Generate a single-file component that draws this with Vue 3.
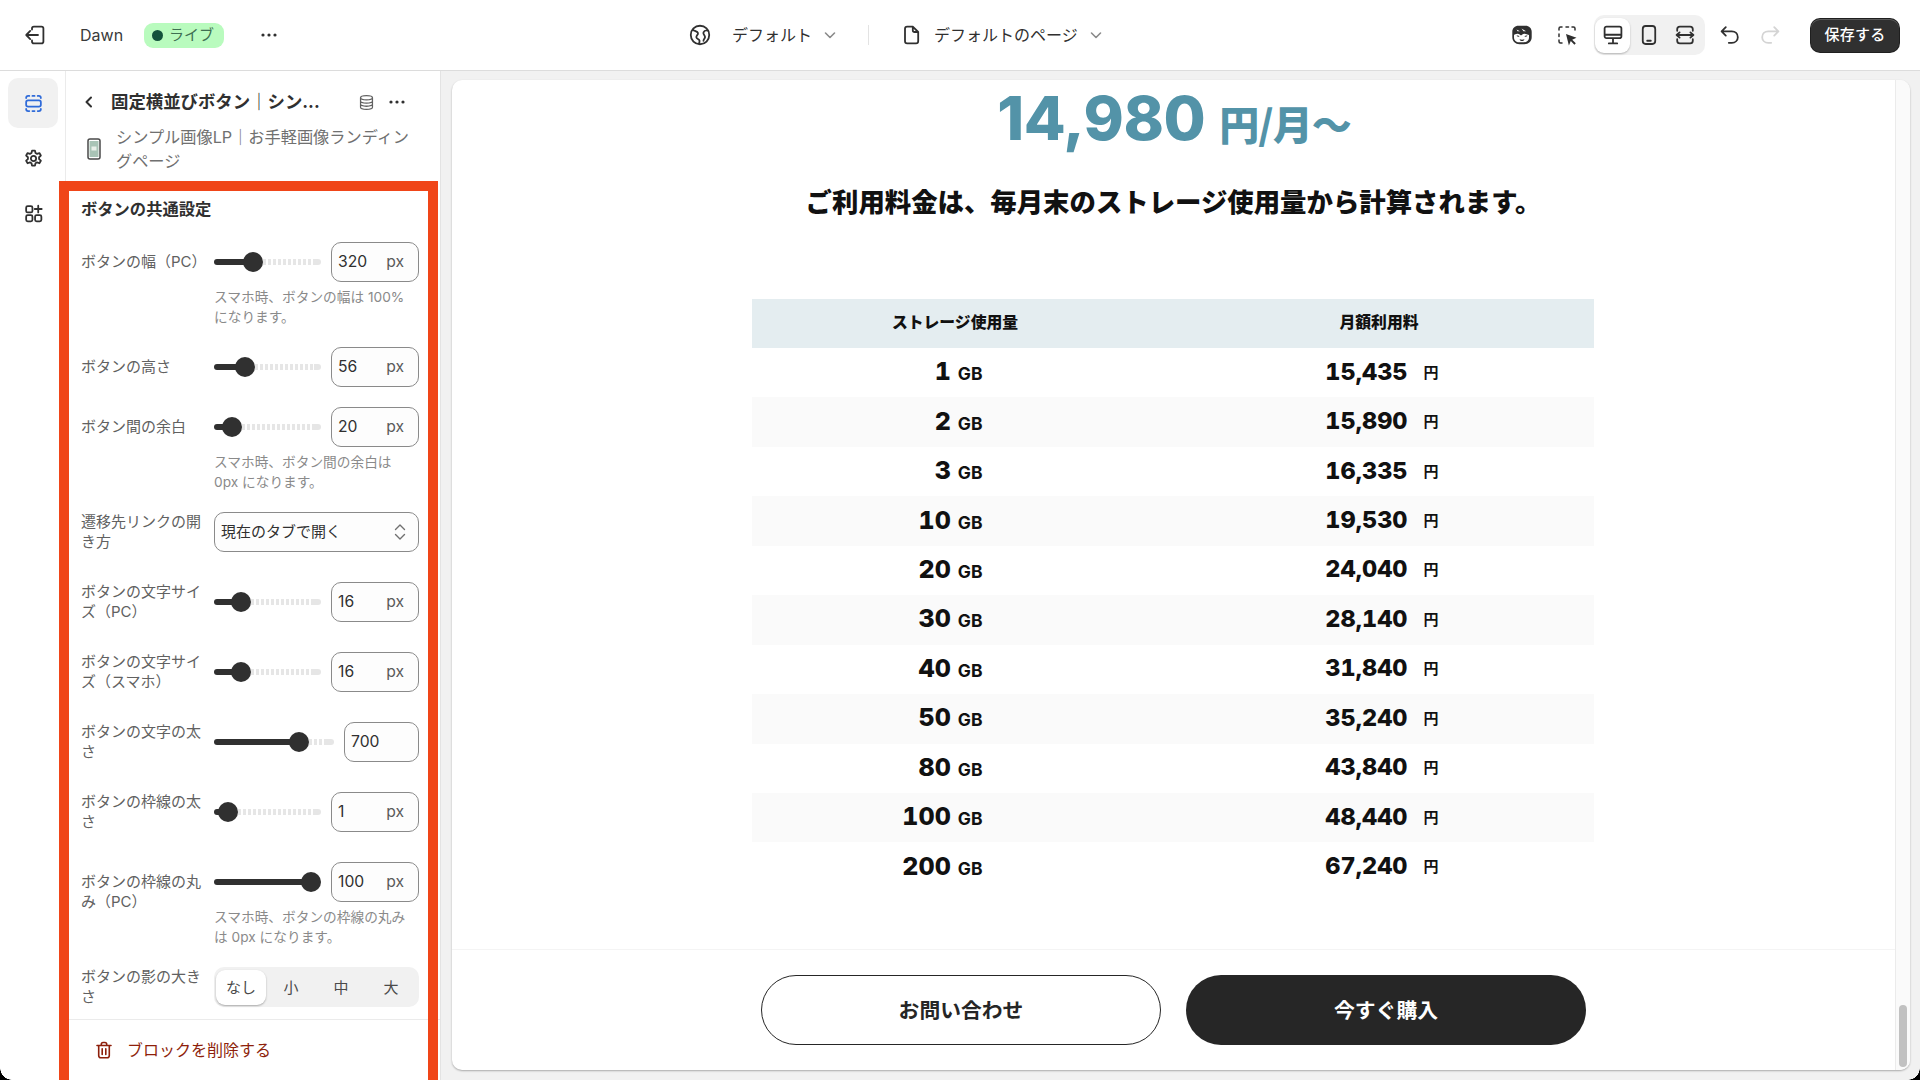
<script setup>
const rows = [
  { label: 'ボタンの幅（PC）', value: '320', fill: 39, help: ['スマホ時、ボタンの幅は 100%', 'になります。'] },
  { label: 'ボタンの高さ', value: '56', fill: 31 },
  { label: 'ボタン間の余白', value: '20', fill: 17.5, help: ['スマホ時、ボタン間の余白は', '0px になります。'] },
  { type: 'select', label: '遷移先リンクの開き方', value: '現在のタブで開く', wide: true },
  { label: 'ボタンの文字サイズ（PC）', value: '16', fill: 27, wide: true },
  { label: 'ボタンの文字サイズ（スマホ）', value: '16', fill: 27, wide: true },
  { label: 'ボタンの文字の太さ', value: '700', fill: 85, wide: true, noUnit: true },
  { label: 'ボタンの枠線の太さ', value: '1', fill: 13.5, wide: true },
  { label: 'ボタンの枠線の丸み（PC）', value: '100', fill: 97, help: ['スマホ時、ボタンの枠線の丸み', 'は 0px になります。'] },
]
const prices = [
  ['1', '15,435'], ['2', '15,890'], ['3', '16,335'], ['10', '19,530'], ['20', '24,040'], ['30', '28,140'],
  ['40', '31,840'], ['50', '35,240'], ['80', '43,840'], ['100', '48,440'], ['200', '67,240'],
]
const shadows = ['なし', '小', '中', '大']
</script>

<template>
  <div class="app">
    <header class="top">
      <div class="top-left">
        <svg class="ic exit" viewBox="0 0 20 20"><path d="M7.5 5.5V4.6c0-.9.7-1.6 1.6-1.6h6.3c.9 0 1.6.7 1.6 1.6v10.8c0 .9-.7 1.6-1.6 1.6H9.100c-.9 0-1.600-.7-1.600-1.600v-.9M12.500 10H2.800M6 6.600 2.700 10 6 13.400"/></svg>
        <span class="theme">Dawn</span>
        <span class="live"><i></i>ライブ</span>
        <svg class="dots" viewBox="0 0 18 6"><circle cx="3" cy="3" r="1.600"/><circle cx="9" cy="3" r="1.600"/><circle cx="15" cy="3" r="1.600"/></svg>
      </div>
      <div class="top-mid">
        <svg class="ic" viewBox="0 0 20 20"><circle cx="10" cy="10" r="7.700"/><path d="M4 5.500c1.500 1.500 3.800 1.300 4.300 2.800.5 1.600-1.800 2.100-1.300 3.800.4 1.300 2.300 1.200 2.600 2.700.1.800-.1 1.500-.4 2.300M16.800 6.300c-1.700-.3-3.400.2-3.900 1.500-.6 1.700 1.400 2.400 1.300 4-.1 1.200-1.200 1.500-1.300 3"/></svg>
        <span class="picker">デフォルト</span>
        <svg class="chev" viewBox="0 0 14 14"><path d="M2.500 5 7 9.500 11.500 5"/></svg>
        <span class="vline"></span>
        <svg class="ic doc" viewBox="0 0 20 20"><path d="M5 4.800C5 3.800 5.800 3 6.800 3h4.700L16 7.500v7.700c0 1-.8 1.800-1.800 1.800H6.800C5.800 17 5 16.200 5 15.200zM11.500 3v3c0 .9.600 1.500 1.500 1.500h3"/></svg>
        <span class="picker">デフォルトのページ</span>
        <svg class="chev" viewBox="0 0 14 14"><path d="M2.500 5 7 9.500 11.500 5"/></svg>
      </div>
      <div class="top-right">
        <svg class="ic mask" viewBox="0 0 24 24"><path class="solid" d="M8.500 2.800h7c3.600 0 6.200 2.600 6.200 6v5.400c0 4-3.200 7-7.200 7h-5c-4 0-7.200-3-7.200-7V8.800c0-3.400 2.600-6 6.200-6z"/><path class="light" d="M4.600 11.400c2.200-.7 4.300-.8 5.400.3.700.7 1.300.7 2 0 1.100-1.100 3.200-1 5.400-.3l1.600.5v2.500c0 2.700-2.300 4.800-5 4.800H9c-2.700 0-5-2.100-5-4.800v-2.500z"/><path class="solid" d="M6.500 12.700c1.300-.3 2.500-.1 3 .8-1 .5-2.100.3-3-.8zM17.500 12.700c-1.300-.3-2.500-.1-3 .8 1 .5 2.100.3 3-.8zM9.500 16.300c1.700.6 3.300.6 5 0-.5 1.300-1.400 1.800-2.500 1.800s-2-.5-2.500-1.800z"/><path class="light" d="M6.500 6.500 10 8.300H7.500zM11.500 5.600l4.500 2.600h-2.500z"/></svg>
        <svg class="ic cursor" viewBox="0 0 24 24"><path d="M7 4H5.500C4.700 4 4 4.700 4 5.500V7M11 4h2.500M17 4h1.500c.8 0 1.500.7 1.500 1.500V7M4 11v2.500M4 17v1.500c0 .8.7 1.500 1.500 1.500H7"/><path class="solid" d="m11 11 10.500 3.800-4.300 1.900 3.600 3.600-1.400 1.400-3.600-3.600-1.900 4.300z"/></svg>
        <div class="devices">
          <span class="dev on"><svg class="ic" viewBox="0 0 20 20"><path d="M4.600 3h10.800C16.300 3 17 3.700 17 4.600V11c0 .9-.7 1.600-1.600 1.600H4.600C3.700 12.600 3 11.900 3 11V4.600C3 3.700 3.700 3 4.600 3zM3 9.800h14M10 12.600v4.200M6.500 17h7"/></svg></span>
          <span class="dev"><svg class="ic" viewBox="0 0 20 20"><rect x="4.800" y="2.500" width="10.400" height="15" rx="2.400"/><path d="M8.500 14.800h3"/></svg></span>
          <span class="dev"><svg class="ic" viewBox="0 0 20 20"><path d="M3.500 6.500V5.200C3.500 4 4.500 3 5.700 3h8.600c1.200 0 2.200 1 2.200 2.200v1.300M3.500 13.500v1.300C3.500 16 4.500 17 5.700 17h8.600c1.200 0 2.200-1 2.200-2.200v-1.300M3 10h14M5.500 7.800 3 10l2.500 2.200M14.500 7.800 17 10l-2.500 2.200"/></svg></span>
        </div>
        <svg class="ic undo" viewBox="0 0 20 20"><path d="M6.500 3.500 3 7l3.500 3.500M3.200 7h8.300c2.900 0 5 2 5 4.800 0 2.700-2.100 4.700-5 4.700H9"/></svg>
        <svg class="ic redo" viewBox="0 0 20 20"><path d="M13.500 3.500 17 7l-3.500 3.500M16.800 7H8.500c-2.900 0-5 2-5 4.800 0 2.700 2.100 4.700 5 4.700H11"/></svg>
        <button class="save">保存する</button>
      </div>
    </header>

    <div class="body">
      <nav class="rail">
        <span class="rail-item active"><svg class="ic" viewBox="0 0 20 20"><path d="M6 2.800H5C3.800 2.800 3 3.700 3 4.800M9 2.800h2M14 2.800h1c1.200 0 2 .9 2 2M3 15.200c0 1.100.8 2 2 2h1M9 17.200h2M14 17.200h1c1.200 0 2-.9 2-2"/><rect x="3" y="7" width="14" height="6" rx="1.800"/></svg></span>
        <span class="rail-item"><svg class="ic" viewBox="0 0 20 20"><circle cx="10" cy="10" r="2.500"/><path d="M8.600 2.500h2.800l.5 2.300 1.500.8 2.200-.8 1.400 2.400-1.700 1.600v1.700l1.700 1.600-1.400 2.400-2.200-.8-1.500.8-.5 2.300H8.600l-.5-2.300-1.500-.8-2.200.8-1.400-2.400 1.700-1.600V8.800L3 7.200l1.400-2.400 2.200.8 1.500-.8z"/></svg></span>
        <span class="rail-item"><svg class="ic" viewBox="0 0 20 20"><rect x="3" y="3" width="6" height="6" rx="1.500"/><rect x="3" y="11.500" width="6" height="6" rx="1.500"/><rect x="11.500" y="11.500" width="6" height="6" rx="1.500"/><path d="M14.500 2.500v6.500M11.200 5.700h6.600"/></svg></span>
      </nav>

      <aside class="panel">
        <div class="panel-head">
          <svg class="back" viewBox="0 0 14 14"><path d="M9 2.500 4.500 7 9 11.500"/></svg>
          <span class="title">固定横並びボタン｜シン...</span>
          <svg class="db" viewBox="0 0 20 20"><ellipse cx="10" cy="4.500" rx="7" ry="2.500"/><path d="M3 4.500v11c0 1.400 3.100 2.500 7 2.500s7-1.100 7-2.500v-11M3 8.200c0 1.400 3.100 2.500 7 2.500s7-1.100 7-2.500M3 11.900c0 1.400 3.100 2.500 7 2.500s7-1.100 7-2.500"/></svg>
          <svg class="dots" viewBox="0 0 18 6"><circle cx="3" cy="3" r="1.600"/><circle cx="9" cy="3" r="1.600"/><circle cx="15" cy="3" r="1.600"/></svg>
        </div>
        <div class="panel-sub">
          <svg class="phone" viewBox="0 0 14 22"><rect x="1" y="1" width="12" height="20" rx="2" fill="#fff" stroke="#4a4a4a" stroke-width="1.500"/><rect x="2.500" y="3" width="9" height="16" fill="#a9c4b6"/><rect x="4.500" y="8.500" width="5" height="4" fill="#e9efe9"/></svg>
          <p>シンプル画像LP｜お手軽画像ランディングページ</p>
        </div>

        <div class="form">
          <h3>ボタンの共通設定</h3>
          <div v-for="r in rows" :key="r.label" class="row" :class="{ wide: r.wide, helped: r.help }">
            <label>{{ r.label }}</label>
            <div class="ctrl">
              <div v-if="r.type === 'select'" class="select">
                <span>{{ r.value }}</span>
                <svg viewBox="0 0 14 20"><path d="M2.500 7.500 7 3l4.500 4.500M2.500 12.500 7 17l4.500-4.500"/></svg>
              </div>
              <div v-else class="range-line">
                <div class="slider">
                  <span class="fill" :style="{ width: r.fill + 'px' }"></span>
                  <span class="rest"></span>
                  <span class="thumb" :style="{ left: r.fill + 'px' }"></span>
                </div>
                <div class="num" :class="{ short: r.noUnit }">
                  <span>{{ r.value }}</span>
                  <em v-if="!r.noUnit">px</em>
                </div>
              </div>
              <p v-if="r.help" class="help"><span v-for="h in r.help" :key="h">{{ h }}</span></p>
            </div>
          </div>
          <div class="row last">
            <label>ボタンの影の大きさ</label>
            <div class="seg">
              <span v-for="(s, i) in shadows" :key="s" :class="{ on: i === 0 }">{{ s }}</span>
            </div>
          </div>
        </div>

        <div class="panel-foot">
          <svg class="trash" viewBox="0 0 20 20"><path d="M3 5.500h14M7.300 5.500V4.300c0-1 .8-1.800 1.800-1.800h1.800c1 0 1.800.8 1.800 1.800v1.200M4.700 5.500v10c0 1.300 1 2.300 2.300 2.300h6c1.300 0 2.300-1 2.300-2.300v-10M8.200 8.800v5.600M11.800 8.800v5.600"/></svg>
          <span>ブロックを削除する</span>
        </div>
      </aside>

      <main class="stage">
        <div class="card">
          <div class="page">
            <div class="scroll">
              <div class="price"><b>14,980</b><span>円/月〜</span></div>
              <h2>ご利用料金は、毎月末のストレージ使用量から計算されます。</h2>
              <div class="table">
                <div class="thead"><span>ストレージ使用量</span><span>月額利用料</span></div>
                <div v-for="p in prices" :key="p[0]" class="tr">
                  <span class="gb"><b>{{ p[0] }}</b><small>GB</small></span>
                  <span class="yen"><b>{{ p[1] }}</b><small>円</small></span>
                </div>
              </div>
            </div>
            <div class="sticky">
              <a class="cta ghost">お問い合わせ</a>
              <a class="cta solid-btn">今すぐ購入</a>
            </div>
          </div>
          <div class="bar"><i></i></div>
        </div>
      </main>
    </div>

    <div class="annot"></div>
    <span class="corner cl"></span>
    <span class="corner cr"></span>
  </div>
</template>

<style>
html, body { margin: 0; overflow: hidden; background: #f1f1f1; }
</style>

<style scoped>
* { box-sizing: border-box; }
.app {
  position: relative; width: 1920px; height: 1080px; overflow: hidden; display: flex; flex-direction: column;
  background: #f1f1f1; color: #303030;
  font-family: Inter, "Noto Sans CJK JP", sans-serif; font-size: 15px; line-height: 20px;
}
.ic { width: 24px; height: 24px; fill: none; stroke: #303030; stroke-width: 1.5; stroke-linecap: round; stroke-linejoin: round; flex: none; }
.ic .solid { fill: #303030; stroke: none; }
.ic .light { fill: #fff; stroke: none; }

.top { height: 71px; flex: none; display: flex; align-items: center; background: #fff; border-bottom: 1px solid #dcdcdc; position: relative; z-index: 2; }
.top-left { display: flex; align-items: center; width: 688px; padding-left: 23px; flex: none; }
.theme { margin-left: 33px; font-size: 16px; color: #3a3a3a; }
.live { display: flex; align-items: center; gap: 6px; margin-left: 21px; width: 80px; height: 25px; padding-left: 8px; border-radius: 9px; background: #b9fbbe; color: #3f6f52; font-size: 15px; }
.live i { width: 11px; height: 11px; border-radius: 50%; background: #14523c; }
.dots { width: 18px; height: 6px; fill: #303030; flex: none; }
.top-left .dots { margin-left: 36px; }
.top-mid { display: flex; align-items: center; }
.picker { font-size: 16px; color: #303030; white-space: nowrap; }
.top-mid .ic:first-child { margin-right: 20px; }
.chev { width: 14px; height: 14px; margin-left: 11px; fill: none; stroke: #8a8a8a; stroke-width: 1.600; stroke-linecap: round; stroke-linejoin: round; }
.vline { width: 1px; height: 20px; background: #e3e3e3; margin: 0 30px 0 31px; }
.doc { margin-right: 11px; }
.top-right { margin-left: auto; padding-right: 21px; display: flex; align-items: center; }
.mask { margin-right: 21px; }
.cursor { margin-right: 15px; }
.devices { display: flex; align-items: center; width: 111px; height: 40px; padding: 2px 1px; background: #f1f1f1; border-radius: 10px; }
.dev { width: 35px; height: 35px; margin-right: 1px; display: flex; align-items: center; justify-content: center; border-radius: 9px; }
.dev.on { background: #fff; box-shadow: 0 1px 2px rgba(0,0,0,.25); }
.undo { margin-left: 13px; }
.redo { margin-left: 16px; stroke: #d4d4d4; }
.save { margin-left: 29px; width: 88px; height: 33px; border: 0; border-radius: 9px; background: #303030; color: #fff; font: 500 15px/20px Inter, "Noto Sans CJK JP", sans-serif; box-shadow: inset 0 1px 0 rgba(255,255,255,.2), 0 0 0 1px #1f1f1f; letter-spacing: .3px; }

.body { flex: 1; min-height: 0; display: flex; }
.rail { width: 66px; flex: none; background: #fff; border-right: 1px solid #ebebeb; padding: 7px 8px 0; display: flex; flex-direction: column; gap: 5px; }
.rail-item { width: 50px; height: 50px; border-radius: 10px; display: flex; align-items: center; justify-content: center; }
.rail-item .ic { width: 21px; height: 21px; stroke-width: 1.700; }
.rail-item.active { background: #f1f1f1; }
.rail-item.active .ic { stroke: #2f6bd9; }

.panel { width: 375px; flex: none; background: #fff; border-right: 1px solid #e3e3e3; display: flex; flex-direction: column; position: relative; }
.panel-head { display: flex; align-items: center; height: 46px; margin-top: 8px; padding: 0 0 0 16px; flex: none; }
.back { width: 14px; height: 14px; fill: none; stroke: #303030; stroke-width: 2; stroke-linecap: round; stroke-linejoin: round; flex: none; }
.title { width: 240px; margin-left: 15px; font-size: 17.400px; font-weight: 700; white-space: nowrap; flex: none; }
.db { width: 17px; height: 17px; margin-left: 7px; fill: none; stroke: #616161; stroke-width: 1.500; }
.panel-head .dots { margin-left: 13px; }
.panel-sub { display: flex; align-items: center; padding-left: 21px; height: 48px; color: #707070; flex: none; }
.phone { width: 14px; height: 22px; flex: none; }
.panel-sub p { margin: 0 0 0 15px; width: 300px; font-size: 16.200px; line-height: 24px; }
.form { flex: 1; padding: 26px 11px 0 15px; min-height: 0; }
h3 { margin: 0 0 23px; font-size: 16.300px; line-height: 20px; font-weight: 700; color: #303030; }
.row { display: grid; grid-template-columns: 124px 205px; column-gap: 9px; align-items: center; margin-bottom: 20px; }
.row.wide { margin-bottom: 30px; }
.row.helped { align-items: start; }
.row.helped label { padding-top: 10px; }
label { color: #616161; font-size: 15px; line-height: 20px; }
.range-line { display: flex; align-items: center; gap: 10px; }
.slider { position: relative; flex: 1; height: 6px; display: flex; }
.fill { height: 6px; background: #303030; border-radius: 3px 0 0 3px; flex: none; }
.rest { flex: 1; height: 6px; border-radius: 0 3px 3px 0; background: linear-gradient(90deg, transparent calc(100% - 7px), #e6e6e6 0), repeating-linear-gradient(90deg, #e6e6e6 0 3px, transparent 3px 5px); }
.thumb { position: absolute; top: 3px; width: 20px; height: 20px; margin: -10px 0 0 -10px; border-radius: 50%; background: #303030; }
.num { width: 88px; height: 40px; flex: none; display: flex; align-items: center; justify-content: space-between; padding: 0 14px 0 6px; border: 1px solid #8a8a8a; border-radius: 10px; background: #fdfdfd; font-size: 15.700px; }
.num.short { width: 75px; }
.num em { font-style: normal; color: #5a5a5a; }
.help { margin: 5px 0 0; font-size: 13.700px; line-height: 20px; color: #8a8a8a; }
.help span { display: block; white-space: nowrap; }
.select { height: 40px; display: flex; align-items: center; justify-content: space-between; padding: 0 11px 0 6px; border: 1px solid #8a8a8a; border-radius: 10px; background: #fdfdfd; }
.select svg { width: 14px; height: 20px; fill: none; stroke: #707070; stroke-width: 1.400; stroke-linecap: round; stroke-linejoin: round; }
.row.last { margin-bottom: 0; }
.seg { height: 40px; display: grid; grid-template-columns: repeat(4, 50px); align-items: center; padding-left: 2px; background: #f1f1f1; border-radius: 10px; color: #4a4a4a; text-align: center; }
.seg span { height: 35px; line-height: 35px; }
.seg .on { background: #fff; border-radius: 9px; box-shadow: 0 1px 2px rgba(0,0,0,.3); }
.panel-foot { height: 61px; flex: none; border-top: 1px solid #ebebeb; display: flex; align-items: center; padding-left: 28px; color: #8e1f0b; font-size: 16px; }
.trash { width: 20px; height: 20px; margin-right: 13px; fill: none; stroke: #8e1f0b; stroke-width: 1.600; stroke-linecap: round; stroke-linejoin: round; }

.stage { flex: 1; min-width: 0; padding: 9px 10px 10px 11px; }
.card { height: 100%; display: flex; background: #fff; border-radius: 10px; overflow: hidden; box-shadow: 0 1px 2px rgba(0,0,0,.3); }
.page { flex: 1; min-width: 0; display: flex; flex-direction: column; color: #000; }
.scroll { flex: 1; min-height: 0; overflow: hidden; display: flex; flex-direction: column; align-items: center; }
.price { display: flex; align-items: baseline; gap: 14px; height: 76px; color: #5393a8; line-height: 76px; margin-left: 1px; }
.price b { font-size: 61px; font-weight: 800; letter-spacing: -.4px; }
.price span { font-size: 40px; font-weight: 900; font-family: "Noto Sans CJK JP", sans-serif; letter-spacing: -1px; }
h2 { margin: 25px 0 0; font: 900 26.400px/40px "Noto Sans CJK JP", sans-serif; color: #111; white-space: nowrap; }
.table { width: 842px; margin: 78px 2px 0 0; flex: none; }
.thead { height: 49px; padding-bottom: 3px; display: grid; grid-template-columns: 1fr 1fr; align-items: center; background: #e4edf0; text-align: center; font: 900 15.800px/20px "Noto Sans CJK JP", sans-serif; color: #111; }
.thead span:first-child { padding-right: 14px; }
.thead span:last-child { padding-right: 8px; }
.tr { height: 49.450px; padding-top: 1px; display: grid; grid-template-columns: 1fr 1fr; align-items: center; text-align: right; font-variant-numeric: tabular-nums; }
.tr:nth-child(odd) { background: #fafafa; }
.tr b { font-weight: 800; color: #111; }
.tr small { font-weight: 700; color: #111; }
.gb { padding-right: 190px; }
.gb b { font-size: 25px; }
.gb small { font-size: 17.500px; margin-left: 7px; }
.yen { padding-right: 155px; }
.yen b { font-size: 23.500px; }
.yen small { font-size: 15px; margin-left: 16px; font-family: "Noto Sans CJK JP", sans-serif; position: relative; top: -2px; }
.sticky { height: 121px; flex: none; border-top: 1px solid #f4f4f4; display: flex; align-items: center; justify-content: center; gap: 25px; }
.cta { width: 400px; height: 70px; border-radius: 35px; display: flex; align-items: center; justify-content: center; padding-bottom: 2px; font: 700 20.800px/24px "Noto Sans CJK JP", sans-serif; }
.ghost { border: 1px solid #262626; color: #262626; background: #fff; }
.solid-btn { background: #262626; color: #fff; }
.bar { width: 15px; flex: none; background: #fafafa; border-left: 1px solid #ebebeb; display: flex; align-items: flex-end; justify-content: center; padding-bottom: 3px; }
.bar i { width: 8px; height: 62px; border-radius: 4px; background: #c1c1c1; }

.annot { position: absolute; left: 59px; top: 181px; width: 379px; height: 950px; border: 10px solid #f04518; pointer-events: none; z-index: 3; }
.corner { position: absolute; bottom: 0; width: 12px; height: 12px; z-index: 4; }
.cl { left: 0; background: radial-gradient(circle at 100% 0, transparent 11.500px, #000 12px); }
.cr { right: 0; background: radial-gradient(circle at 0 0, transparent 11.500px, #000 12px); }
</style>
